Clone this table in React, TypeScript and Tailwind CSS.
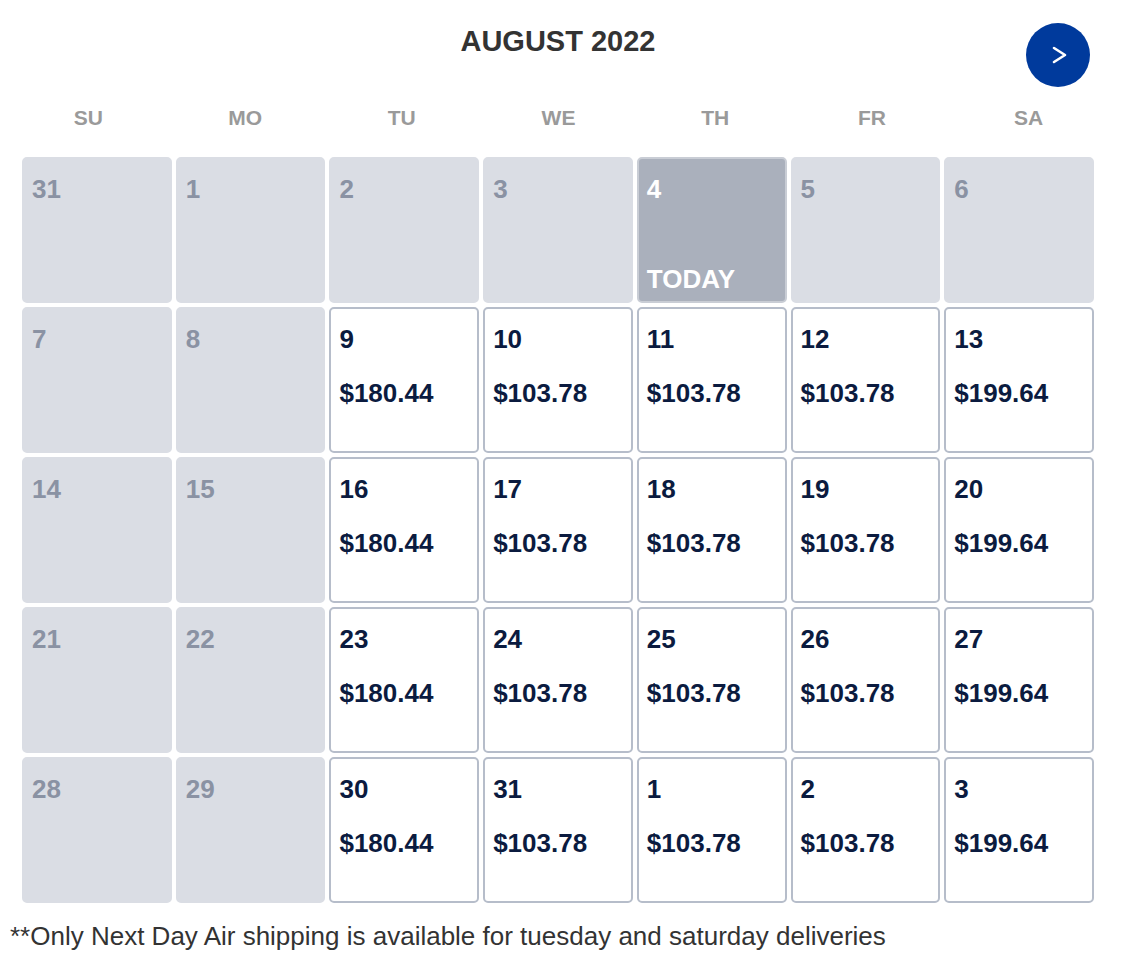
const weekdays = ['SU', 'MO', 'TU', 'WE', 'TH', 'FR', 'SA'];

type Day = { day: number; price?: string; today?: boolean };

const prices = ['$180.44', '$103.78', '$103.78', '$103.78', '$199.64'];

const weeks: Day[][] = [
  [{ day: 31 }, { day: 1 }, { day: 2 }, { day: 3 }, { day: 4, today: true }, { day: 5 }, { day: 6 }],
  [7, 8, 9, 10, 11, 12, 13],
  [14, 15, 16, 17, 18, 19, 20],
  [21, 22, 23, 24, 25, 26, 27],
  [28, 29, 30, 31, 1, 2, 3],
].map((row, ri) =>
  ri === 0
    ? (row as Day[])
    : (row as number[]).map((d, i) => (i < 2 ? { day: d } : { day: d, price: prices[i - 2] }))
);

function Cell({ d }: { d: Day }) {
  if (d.today) {
    return (
      <div className="flex flex-col justify-between rounded-[5px] border-2 border-[#c9cdd5] bg-[#aab0bc] pl-[8px] pt-[15px] pb-[7px] text-white">
        <div className="text-[26px] font-bold leading-[30px]">{d.day}</div>
        <div className="text-[26px] font-bold leading-[30px]">TODAY</div>
      </div>
    );
  }
  if (!d.price) {
    return (
      <div className="rounded-[5px] border-2 border-[#dadde4] bg-[#dadde4] pl-[8px] pt-[15px] text-[#8a92a3]">
        <div className="text-[26px] font-bold leading-[30px]">{d.day}</div>
      </div>
    );
  }
  return (
    <div className="rounded-[5px] border-2 border-[#b6bdca] bg-white pl-[8px] pt-[15px] text-[#0b1b3f]">
      <div className="text-[26px] font-bold leading-[30px]">{d.day}</div>
      <div className="mt-[24px] text-[26px] font-bold leading-[30px]">{d.price}</div>
    </div>
  );
}

export default function App() {
  return (
    <div className="h-[974px] w-[1124px] bg-white font-['Liberation_Sans',Arial,sans-serif]">
      <div className="ml-[22px] grid h-[90px] w-[1072px] grid-cols-[1fr_auto_1fr]">
        <div />
        <div className="pt-[24px] text-[29px] font-bold leading-[34px] text-[#333333]">AUGUST 2022</div>
        <div className="flex justify-end">
          <button className="mr-[4px] mt-[23px] flex h-16 w-16 items-center justify-center rounded-full bg-[#003a9c]">
            <svg width="18" height="22" viewBox="0 0 18 22" fill="none" className="ml-[2px]">
              <polyline points="4,4 15,11 4,18" stroke="white" strokeWidth="2.6" strokeLinecap="round" strokeLinejoin="round" />
            </svg>
          </button>
        </div>
      </div>

      <div className="ml-[10px] grid h-[56px] w-[1097px] grid-cols-7 items-center">
        {weekdays.map((w) => (
          <div key={w} className="text-center text-[21px] font-bold leading-[24px] text-[#9a9a9a]">
            {w}
          </div>
        ))}
      </div>

      <div className="ml-[22px] mt-[11px] grid w-[1072px] grid-cols-7 auto-rows-[146px] gap-[4px]">
        {weeks.flat().map((d, i) => (
          <Cell key={i} d={d} />
        ))}
      </div>

      <div className="mt-[18px] pl-[10px] text-[26px] leading-[30px] text-[#333333]">
        **Only Next Day Air shipping is available for tuesday and saturday deliveries
      </div>
    </div>
  );
}
